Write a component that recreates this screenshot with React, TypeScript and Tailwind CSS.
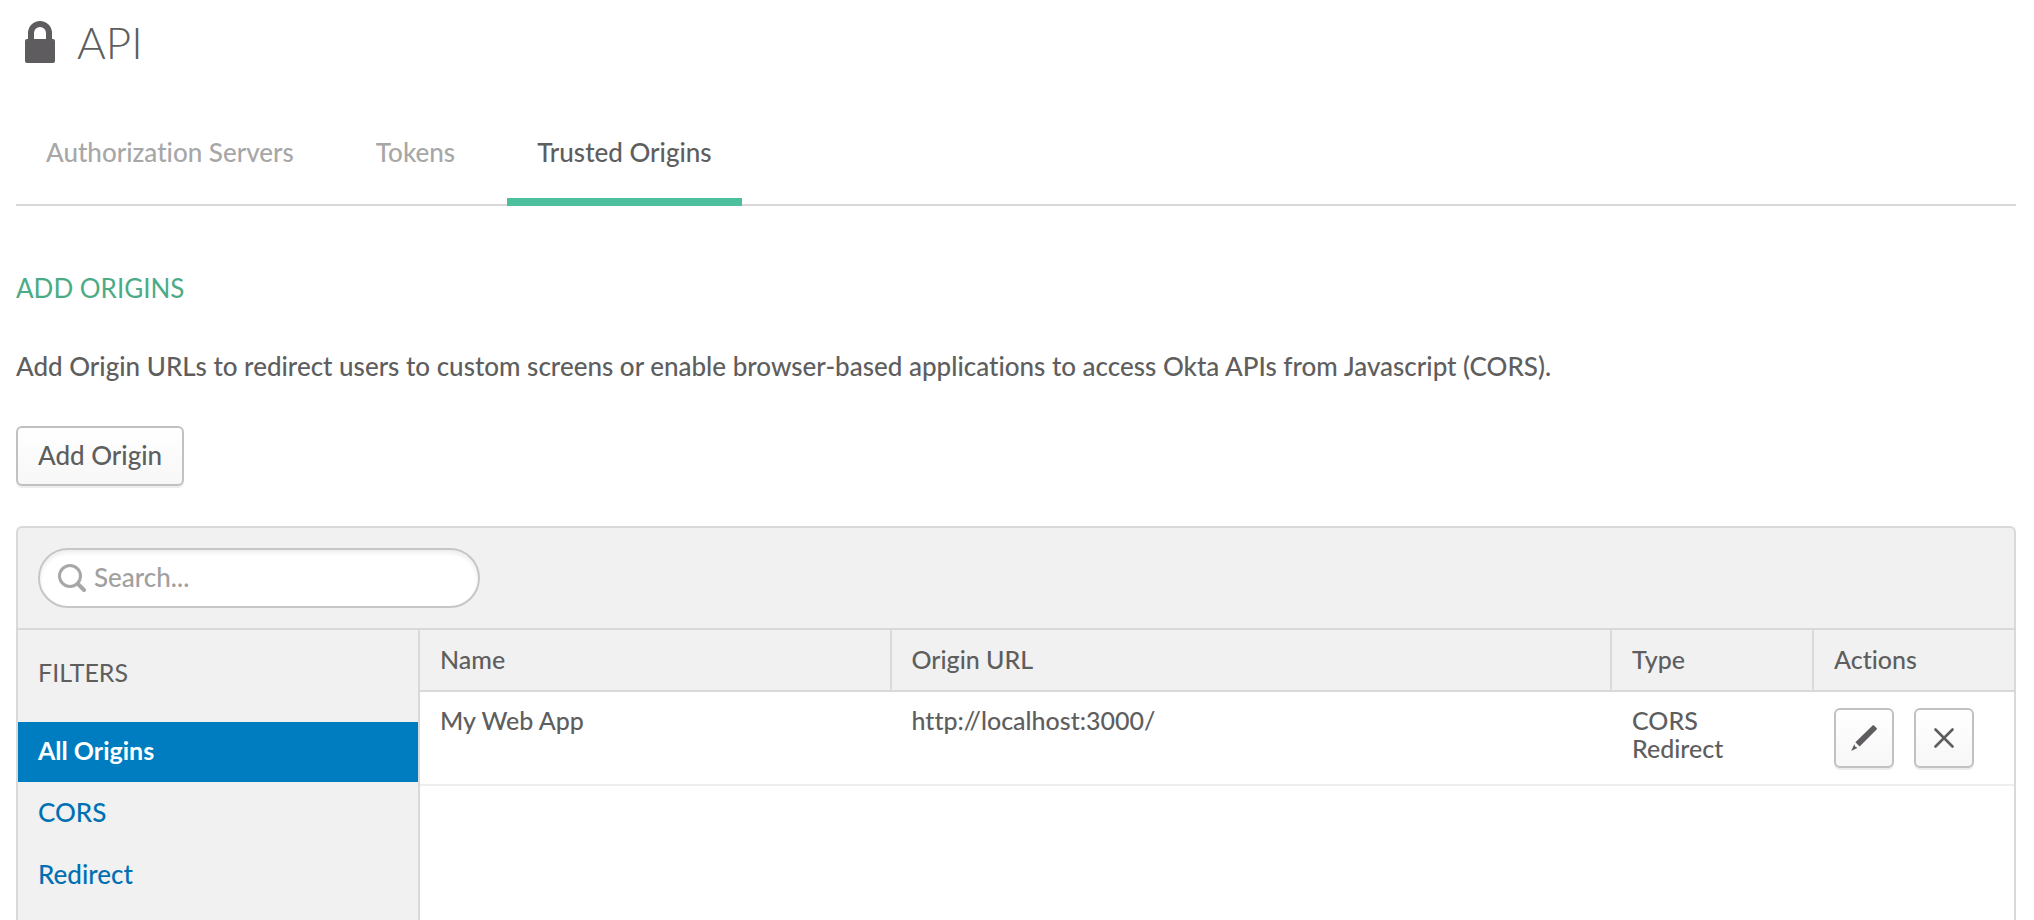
import React from 'react';

const tabs = ['Authorization Servers', 'Tokens', 'Trusted Origins'];
const filters = ['All Origins', 'CORS', 'Redirect'];
const columns = ['Name', 'Origin URL', 'Type', 'Actions'];
const origins = [{ name: 'My Web App', url: 'http://localhost:3000/', types: ['CORS', 'Redirect'] }];

const buttonClass =
  'flex h-[60px] items-center justify-center rounded-md border-2 border-[#c1c1c1] bg-linear-to-b from-white to-[#f7f7f7] shadow-[0_2px_0_#ededed]';

const cellClass = 'border-b-2 border-[#eeeeee] pt-3.5 pl-5';

function LockIcon() {
  return (
    <svg width="30" height="42" viewBox="0 0 30 42" fill="#5e5c5f" aria-hidden="true">
      <path
        fillRule="evenodd"
        d="M3 18V12a12 12 0 0 1 24 0v6h1a2 2 0 0 1 2 2v20a2 2 0 0 1-2 2H2a2 2 0 0 1-2-2V20a2 2 0 0 1 2-2zM9 18h12v-6a6 6 0 0 0-12 0z"
      />
    </svg>
  );
}

function SearchIcon() {
  return (
    <svg width="28" height="28" viewBox="0 0 28 28" fill="none" stroke="#a7a7a7" aria-hidden="true">
      <circle cx="12" cy="12" r="10.5" strokeWidth="3" />
      <path d="M20 20l6 6" strokeWidth="4" strokeLinecap="round" />
    </svg>
  );
}

function PencilIcon() {
  return (
    <svg width="26" height="26" viewBox="0 0 26 26" fill="#5e5c5f" aria-hidden="true">
      <path d="M21.6.4a1 1 0 0 1 1.4 0l2.6 2.6a1 1 0 0 1 0 1.4L8.6 21.4 4.4 17.2z" />
      <path d="M3.3 19.3l1.2 2.6 2.2.9L.2 26z" />
    </svg>
  );
}

function CloseIcon() {
  return (
    <svg width="20" height="20" viewBox="0 0 20 20" stroke="#5e5c5f" strokeWidth="2.6" strokeLinecap="round" aria-hidden="true">
      <path d="M1.5 1.5l17 17M18.5 1.5l-17 17" />
    </svg>
  );
}

export default function App() {
  return (
    <div className="flex min-h-screen flex-col bg-white pr-[18px] pl-4 font-['Lato',sans-serif] text-[26px] leading-7 font-medium text-[#5e5e5e] [font-variant-ligatures:none]">
      <header className="flex items-center gap-[22px] px-[9px] pt-[14px]">
        <LockIcon />
        <h1 className="text-[44px] leading-[56px] font-light">API</h1>
      </header>

      <nav className="mt-[68px] flex gap-[22px] border-b-2 border-[#d9d9d9]">
        {tabs.map((tab) => (
          <a
            key={tab}
            href="#"
            aria-current={tab === 'Trusted Origins' ? 'page' : undefined}
            className={
              tab === 'Trusted Origins'
                ? '-mb-0.5 border-b-8 border-[#4cbf9c] px-[30px] pb-8 text-[#5e5e5e]'
                : 'px-[30px] pb-[38px] text-[#a7a7a7]'
            }
          >
            {tab}
          </a>
        ))}
      </nav>

      <main className="flex grow flex-col">
        <h2 className="mt-[66px] leading-8 font-normal text-[#4cab87]">ADD ORIGINS</h2>
        <p className="mt-12">
          Add Origin URLs to redirect users to custom screens or enable browser-based applications to access Okta APIs
          from Javascript (CORS).
        </p>
        <button type="button" className={`${buttonClass} mt-[46px] self-start px-5 pb-0.5`}>
          Add Origin
        </button>

        <section className="mt-10 flex grow flex-col rounded-t-md border-2 border-b-0 border-[#d9d9d9] bg-[#f1f1f1]">
          <div className="border-b-2 border-[#d9d9d9] px-5 py-5">
            <label className="flex h-[60px] w-[442px] items-center gap-2 rounded-full border-2 border-[#c6c6c6] bg-white px-[18px] shadow-[inset_0_3px_4px_#eeeeee]">
              <SearchIcon />
              <input
                type="text"
                aria-label="Search"
                placeholder="Search..."
                className="min-w-0 grow bg-transparent pb-0.5 outline-none placeholder:text-[#a0a0a0]"
              />
            </label>
          </div>

          <div className="flex grow">
            <aside className="w-[402px] shrink-0 border-r-2 border-[#d9d9d9]">
              <h3 className="px-5 pt-7 pb-9 text-[25px] leading-7 font-normal">FILTERS</h3>
              <ul className="flex flex-col gap-0.5">
                {filters.map((filter) => (
                  <li key={filter}>
                    <a
                      href="#"
                      className={
                        filter === 'All Origins'
                          ? 'block bg-[#007dc1] px-5 pt-3.5 pb-[18px] text-[25px] leading-7 font-bold text-white'
                          : 'block px-5 pt-3.5 pb-[18px] text-[#0070b3]'
                      }
                    >
                      {filter}
                    </a>
                  </li>
                ))}
              </ul>
            </aside>

            <div className="grow bg-white">
              <table className="w-full table-fixed border-separate border-spacing-0 text-left text-[25px] leading-7">
                <colgroup>
                  <col />
                  <col className="w-[45.2%]" />
                  <col className="w-[202px]" />
                  <col className="w-[200px]" />
                </colgroup>
                <thead>
                  <tr>
                    {columns.map((column) => (
                      <th
                        key={column}
                        scope="col"
                        className="h-[62px] border-r-2 border-b-2 border-[#d9d9d9] bg-[#f1f1f1] pb-0.5 pl-5 font-medium last:border-r-0"
                      >
                        {column}
                      </th>
                    ))}
                  </tr>
                </thead>
                <tbody>
                  {origins.map((origin) => (
                    <tr key={origin.name} className="align-top">
                      <td className={cellClass}>{origin.name}</td>
                      <td className={cellClass}>{origin.url}</td>
                      <td className={cellClass}>
                        {origin.types.map((type) => (
                          <div key={type}>{type}</div>
                        ))}
                      </td>
                      <td className="border-b-2 border-[#eeeeee] py-4 pl-5">
                        <div className="flex gap-5">
                          <button type="button" aria-label="Edit" className={`${buttonClass} w-[60px]`}>
                            <PencilIcon />
                          </button>
                          <button type="button" aria-label="Delete" className={`${buttonClass} w-[60px]`}>
                            <CloseIcon />
                          </button>
                        </div>
                      </td>
                    </tr>
                  ))}
                </tbody>
              </table>
            </div>
          </div>
        </section>
      </main>
    </div>
  );
}
